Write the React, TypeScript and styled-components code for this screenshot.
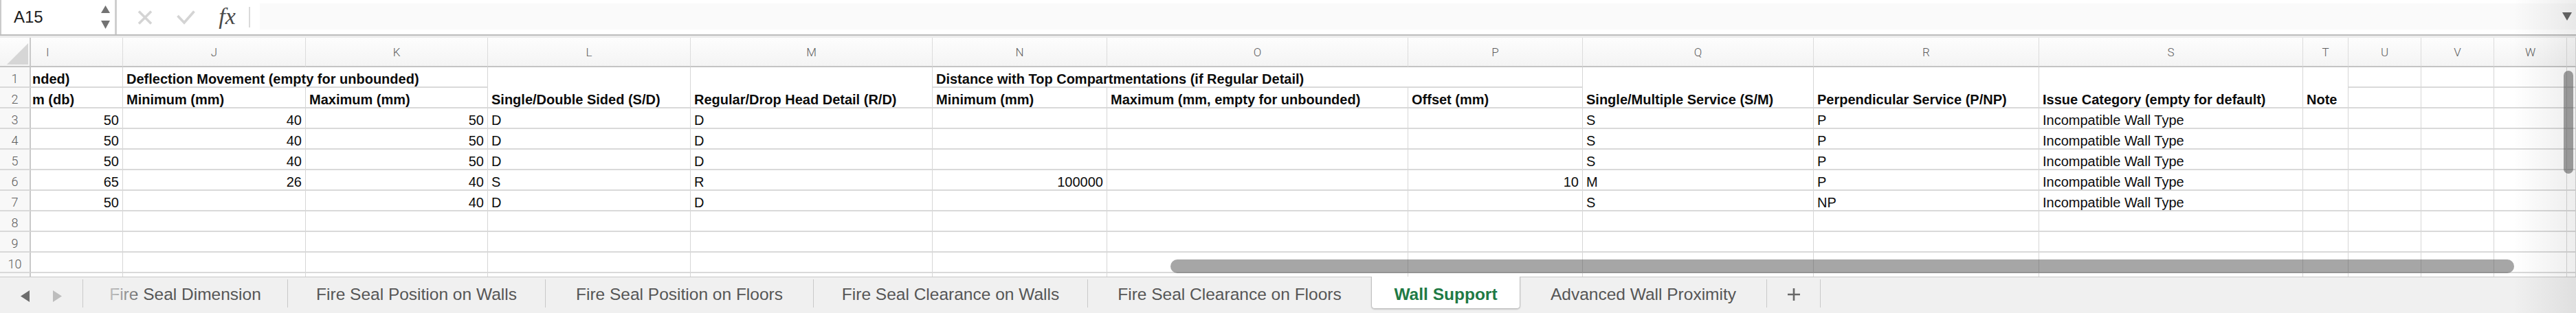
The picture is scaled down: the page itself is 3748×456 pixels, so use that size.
import React from 'react';
import styled, { createGlobalStyle } from 'styled-components';

const GlobalStyle = createGlobalStyle`
  html, body { margin: 0; padding: 0; background: #ffffff; }
  body { font-family: "Liberation Sans", Arial, sans-serif; }
  #root { width: 3748px; height: 456px; }
`;

const COL_WIDTHS = [45, 134, 266, 265, 295, 352, 254, 438, 254, 336, 328, 384, 66, 106, 106, 106];
const COL_LETTERS = ['I', 'J', 'K', 'L', 'M', 'N', 'O', 'P', 'Q', 'R', 'S', 'T', 'U', 'V', 'W'];

const Window = styled.div`
  position: relative;
  width: 3748px;
  height: 456px;
  overflow: hidden;
  display: flex;
  flex-direction: column;
  background: #ffffff;
`;

/* ---------- formula bar ---------- */
const FormulaBar = styled.div`
  height: 50px;
  flex: none;
  display: flex;
  align-items: stretch;
  border-bottom: 2px solid #bdbdbd;
  background: #ffffff;
`;

const BarGap = styled.div`
  height: 3px;
  flex: none;
  background: #ececec;
`;

const NameBox = styled.div`
  width: 170px;
  box-sizing: border-box;
  border-left: 2px solid #cbcbcb;
  border-right: 3px solid #cfcfcf;
  display: flex;
  align-items: center;
  justify-content: space-between;
  padding: 0 7px 0 18px;
  font-size: 24px;
  color: #1d1d1d;
`;

const Actions = styled.div`
  display: flex;
  align-items: center;
  padding-left: 30px;
`;

const ActionSlot = styled.div<{ $w: number; $after: number }>`
  width: ${p => p.$w}px;
  margin-right: ${p => p.$after}px;
  display: flex;
  align-items: center;
  justify-content: center;
  flex: none;
`;

const Fx = styled.span`
  font-family: "Liberation Serif", "Times New Roman", serif;
  font-style: italic;
  font-size: 34px;
  line-height: 34px;
  color: #4a4a4a;
  margin-top: -2px;
`;

const BarDivider = styled.div`
  width: 2px;
  height: 30px;
  background: #dadada;
  margin-right: 14px;
  flex: none;
`;

const FormulaInput = styled.div`
  flex: 1;
  margin: 5px 0 7px 0;
  background: #fafafa;
  display: flex;
  align-items: center;
  justify-content: flex-end;
  padding-right: 6px;
`;

/* ---------- sheet grid ---------- */
const Sheet = styled.div`
  flex: 1;
  display: grid;
  grid-template-columns: ${COL_WIDTHS.map(w => `${w}px`).join(' ')} 1fr;
  grid-template-rows: 43px repeat(10, 30px) 1fr;
  overflow: hidden;
`;

const ColHead = styled.div<{ $start?: boolean; $corner?: boolean }>`
  box-sizing: border-box;
  position: relative;
  border-right: ${p => (p.$corner ? '2px solid #c9c9c9' : '1px solid #dcdcdc')};
  border-bottom: 2px solid #c4c4c4;
  background: linear-gradient(#fdfdfd, #f4f4f4);
  display: flex;
  align-items: center;
  justify-content: ${p => (p.$start ? 'flex-start' : 'center')};
  padding-left: ${p => (p.$start ? '22px' : '0')};
  font-family: Roboto, "Liberation Sans", sans-serif;
  font-weight: 300;
  font-size: 17px;
  color: #5e5e5e;
`;

const CornerMark = styled.svg`
  position: absolute;
  left: 10px;
  top: 8px;
`;

const RowHead = styled.div<{ $last?: boolean }>`
  box-sizing: border-box;
  border-right: 2px solid #c9c9c9;
  border-bottom: ${p => (p.$last ? 'none' : '2px solid #d9d9d9')};
  background: #f8f8f8;
  display: flex;
  align-items: flex-end;
  justify-content: center;
  padding-bottom: 1px;
  line-height: 20px;
  font-family: Roboto, "Liberation Sans", sans-serif;
  font-weight: 300;
  font-size: 18px;
  color: #5c5c5c;
`;

const Cell = styled.div<{
  $align?: 'left' | 'right';
  $bold?: boolean;
  $cs?: number;
  $rs?: number;
  $tight?: boolean;
  $last?: boolean;
}>`
  box-sizing: border-box;
  grid-column: span ${p => p.$cs ?? 1};
  grid-row: span ${p => p.$rs ?? 1};
  border-right: 1px solid #d6d6d6;
  border-bottom: ${p => (p.$last ? 'none' : '2px solid #d9d9d9')};
  background: #ffffff;
  display: flex;
  align-items: flex-end;
  justify-content: ${p => (p.$align === 'right' ? 'flex-end' : 'flex-start')};
  padding: 0 5px 1px ${p => (p.$tight ? '2px' : '5px')};
  line-height: 20px;
  font-size: 20px;
  font-weight: ${p => (p.$bold ? 700 : 400)};
  color: #0c0c0c;
  white-space: nowrap;
  overflow: hidden;
`;

/* ---------- sheet tabs ---------- */
const TabBar = styled.div`
  height: 53px;
  flex: none;
  box-sizing: border-box;
  border-top: 1px solid #c8c8c8;
  background: #f0f0f0;
  display: flex;
  align-items: stretch;
`;

const NavArrows = styled.div`
  width: 120px;
  box-sizing: border-box;
  display: flex;
  align-items: center;
  gap: 34px;
  padding: 2px 0 0 30px;
  flex: none;
`;

const TabDivider = styled.div`
  width: 1px;
  flex: none;
  background: #c9c9c9;
  margin: 3px 0 8px;
`;

const SheetTab = styled.div<{ $w: number }>`
  width: ${p => p.$w}px;
  display: flex;
  align-items: center;
  justify-content: center;
  padding-bottom: 2px;
  font-size: 24.5px;
  color: #565656;
  white-space: nowrap;
  flex: none;
`;

const ActiveTab = styled.div<{ $w: number }>`
  width: ${p => p.$w}px;
  margin-top: -1px;
  height: 47px;
  box-sizing: border-box;
  display: flex;
  align-items: center;
  justify-content: center;
  padding-top: 6px;
  background: #ffffff;
  border: 1px solid #c2c2c2;
  border-top: none;
  border-radius: 0 0 5px 5px;
  box-shadow: 0 1px 2px rgba(0, 0, 0, 0.18);
  font-size: 24.5px;
  font-weight: 700;
  color: #1f7a45;
  white-space: nowrap;
  flex: none;
`;

const PlusTab = styled.div`
  width: 77px;
  display: flex;
  align-items: center;
  justify-content: center;
  padding-bottom: 2px;
  flex: none;
`;

/* ---------- overlays ---------- */
const HThumb = styled.div`
  position: absolute;
  left: 1703px;
  top: 378px;
  width: 1955px;
  height: 20px;
  border-radius: 10px;
  background: rgba(85, 85, 85, 0.52);
`;

const VThumb = styled.div`
  position: absolute;
  left: 3730px;
  top: 103px;
  width: 14px;
  height: 150px;
  border-radius: 7px;
  background: rgba(85, 85, 85, 0.55);
`;

const RightShade = styled.div`
  position: absolute;
  top: 0;
  right: 0;
  width: 92px;
  height: 100%;
  background: linear-gradient(to right, rgba(0, 0, 0, 0), rgba(0, 0, 0, 0.07));
  pointer-events: none;
`;

const TabFade = styled.div`
  position: absolute;
  left: 121px;
  top: 404px;
  width: 95px;
  height: 50px;
  background: linear-gradient(
    to right,
    rgba(240, 240, 240, 0.9) 0,
    rgba(240, 240, 240, 0.62) 45px,
    rgba(240, 240, 240, 0) 92px
  );
  pointer-events: none;
`;

/* ---------- data ---------- */
type Row = (string | number)[];
const DATA: Row[] = [
  [50, 40, 50, 'D', 'D', '', '', '', 'S', 'P', 'Incompatible Wall Type'],
  [50, 40, 50, 'D', 'D', '', '', '', 'S', 'P', 'Incompatible Wall Type'],
  [50, 40, 50, 'D', 'D', '', '', '', 'S', 'P', 'Incompatible Wall Type'],
  [65, 26, 40, 'S', 'R', 100000, '', 10, 'M', 'P', 'Incompatible Wall Type'],
  [50, '', 40, 'D', 'D', '', '', '', 'S', 'NP', 'Incompatible Wall Type'],
];

const TABS: { label: string; w: number }[] = [
  { label: 'Fire Seal Dimension', w: 297 },
  { label: 'Fire Seal Position on Walls', w: 374 },
  { label: 'Fire Seal Position on Floors', w: 389 },
  { label: 'Fire Seal Clearance on Walls', w: 398 },
  { label: 'Fire Seal Clearance on Floors', w: 412 },
];

const Spinner = () => (
  <svg width="13" height="34" viewBox="0 0 13 34">
    <polygon points="6.5,0 13,11 0,11" fill="#737373" />
    <polygon points="0,22 13,22 6.5,34" fill="#737373" />
  </svg>
);

const CancelIcon = () => (
  <svg width="22" height="21" viewBox="0 0 22 21">
    <path d="M2 1.5 L20 19.5 M20 1.5 L2 19.5" stroke="#d4d4d4" strokeWidth="3.6" />
  </svg>
);

const CheckIcon = () => (
  <svg width="27" height="21" viewBox="0 0 27 21">
    <path d="M1.5 8 L11 18 L25.5 1.5" stroke="#d4d4d4" strokeWidth="3.6" fill="none" />
  </svg>
);

const Caret = () => (
  <svg width="14" height="12" viewBox="0 0 14 12">
    <polygon points="0,0 14,0 7,12" fill="#666666" />
  </svg>
);

const NavLeft = ({ color }: { color: string }) => (
  <svg width="13" height="17" viewBox="0 0 13 17">
    <polygon points="13,0 13,17 0,8.5" fill={color} />
  </svg>
);

const NavRight = ({ color }: { color: string }) => (
  <svg width="13" height="17" viewBox="0 0 13 17">
    <polygon points="0,0 13,8.5 0,17" fill={color} />
  </svg>
);

const PlusIcon = () => (
  <svg width="18" height="18" viewBox="0 0 18 18">
    <path d="M9 0 V18 M0 9 H18" stroke="#686868" strokeWidth="2.6" />
  </svg>
);

const EMPTY_TAIL = 4; /* U, V, W and the partial column after W */

export default function App() {
  return (
    <>
      <GlobalStyle />
      <Window>
        <FormulaBar>
          <NameBox>
            <span>A15</span>
            <Spinner />
          </NameBox>
          <Actions>
            <ActionSlot $w={22} $after={35}>
              <CancelIcon />
            </ActionSlot>
            <ActionSlot $w={27} $after={33}>
              <CheckIcon />
            </ActionSlot>
            <ActionSlot $w={27} $after={18}>
              <Fx>fx</Fx>
            </ActionSlot>
            <BarDivider />
          </Actions>
          <FormulaInput>
            <Caret />
          </FormulaInput>
        </FormulaBar>
        <BarGap />

        <Sheet>
          {/* column headers */}
          <ColHead $corner>
            <CornerMark width="31" height="31" viewBox="0 0 31 31">
              <polygon points="31,0 31,31 0,31" fill="#d6d6d6" />
            </CornerMark>
          </ColHead>
          {COL_LETTERS.map((l, i) => (
            <ColHead key={l} $start={i === 0}>
              {l}
            </ColHead>
          ))}
          <ColHead />

          {/* row 1 */}
          <RowHead>1</RowHead>
          <Cell $bold $tight>nded)</Cell>
          <Cell $bold $cs={2}>Deflection Movement (empty for unbounded)</Cell>
          <Cell $bold $rs={2}>Single/Double Sided (S/D)</Cell>
          <Cell $bold $rs={2}>Regular/Drop Head Detail (R/D)</Cell>
          <Cell $bold $cs={3}>Distance with Top Compartmentations (if Regular Detail)</Cell>
          <Cell $bold $rs={2}>Single/Multiple Service (S/M)</Cell>
          <Cell $bold $rs={2}>Perpendicular Service (P/NP)</Cell>
          <Cell $bold $rs={2}>Issue Category (empty for default)</Cell>
          <Cell $bold $rs={2}>Note</Cell>
          {Array.from({ length: EMPTY_TAIL }).map((_, i) => (
            <Cell key={`r1-${i}`} />
          ))}

          {/* row 2 */}
          <RowHead>2</RowHead>
          <Cell $bold $tight>m (db)</Cell>
          <Cell $bold>Minimum (mm)</Cell>
          <Cell $bold>Maximum (mm)</Cell>
          <Cell $bold>Minimum (mm)</Cell>
          <Cell $bold>Maximum (mm, empty for unbounded)</Cell>
          <Cell $bold>Offset (mm)</Cell>
          {Array.from({ length: EMPTY_TAIL }).map((_, i) => (
            <Cell key={`r2-${i}`} />
          ))}

          {/* data rows */}
          {DATA.map((row, r) => (
            <React.Fragment key={`d${r}`}>
              <RowHead>{r + 3}</RowHead>
              {row.map((v, c) => (
                <Cell key={c} $align={typeof v === 'number' ? 'right' : 'left'}>
                  {v}
                </Cell>
              ))}
              <Cell />
              {Array.from({ length: EMPTY_TAIL }).map((_, i) => (
                <Cell key={`t${i}`} />
              ))}
            </React.Fragment>
          ))}

          {/* empty rows 8-10 and partial 11 */}
          {[8, 9, 10, 11].map(n => (
            <React.Fragment key={`e${n}`}>
              <RowHead $last={n === 11}>{n === 11 ? '' : n}</RowHead>
              {Array.from({ length: 16 }).map((_, i) => (
                <Cell key={i} $last={n === 11} />
              ))}
            </React.Fragment>
          ))}
        </Sheet>

        <TabBar>
          <NavArrows>
            <NavLeft color="#6c6c6c" />
            <NavRight color="#bdbdbd" />
          </NavArrows>
          <TabDivider />
          {TABS.map((t, i) => (
            <React.Fragment key={t.label}>
              <SheetTab $w={t.w}>{t.label}</SheetTab>
              {i < TABS.length - 1 && <TabDivider />}
            </React.Fragment>
          ))}
          <ActiveTab $w={217}>Wall Support</ActiveTab>
          <SheetTab $w={358}>Advanced Wall Proximity</SheetTab>
          <TabDivider />
          <PlusTab>
            <PlusIcon />
          </PlusTab>
          <TabDivider />
        </TabBar>

        <HThumb />
        <VThumb />
        <TabFade />
        <RightShade />
      </Window>
    </>
  );
}
